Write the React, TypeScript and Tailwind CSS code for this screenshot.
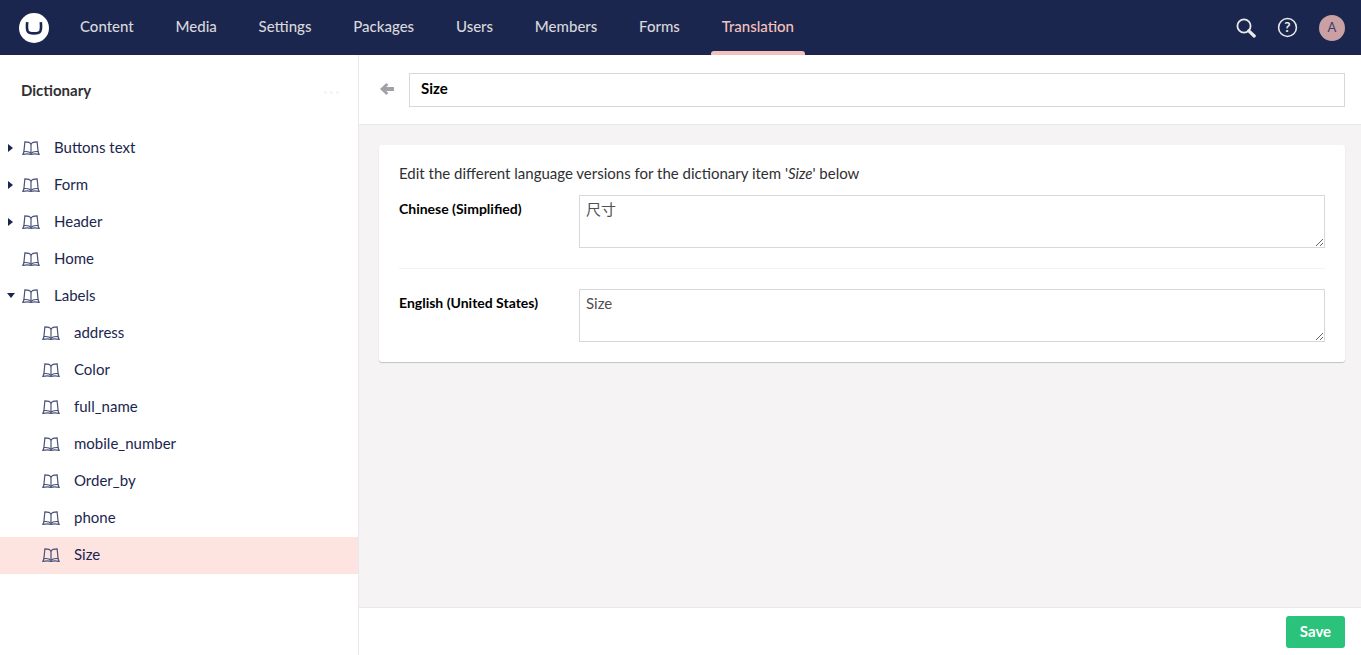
const navItems = ["Content", "Media", "Settings", "Packages", "Users", "Members", "Forms", "Translation"];

const treeItems = [
  { name: "Buttons text", caret: "right", depth: 0 },
  { name: "Form", caret: "right", depth: 0 },
  { name: "Header", caret: "right", depth: 0 },
  { name: "Home", caret: "", depth: 0 },
  { name: "Labels", caret: "down", depth: 0 },
  { name: "address", caret: "", depth: 1 },
  { name: "Color", caret: "", depth: 1 },
  { name: "full_name", caret: "", depth: 1 },
  { name: "mobile_number", caret: "", depth: 1 },
  { name: "Order_by", caret: "", depth: 1 },
  { name: "phone", caret: "", depth: 1 },
  { name: "Size", caret: "", depth: 1 },
];

function BookIcon() {
  return (
    <svg width="18" height="14" viewBox="0 0 18 14" fill="none" stroke="#4a5378" strokeWidth="1.2" className="shrink-0">
      <path d="M9 3C8 1.4 6 0.8 2.9 0.8L1.9 10.6C4.8 10.3 7.6 10.6 9 12.4C10.4 10.6 13.2 10.3 16.1 10.6L15.1 0.8C12 0.8 10 1.4 9 3Z" />
      <path d="M9 3V12.4" />
      <path d="M1.9 10.6L0.9 13.3C3.6 12.8 7 12.8 9 13.3C11 12.8 14.4 12.8 17.1 13.3L16.1 10.6" />
    </svg>
  );
}

function TreeRow({ name, caret, depth }: { name: string; caret: string; depth: number }) {
  const selected = name === "Size";
  return (
    <div className={`flex h-[37px] items-center pb-[2px] ${selected ? "bg-[#fee4e1]" : ""} ${depth ? "pl-[42px]" : "pl-[22px]"}`}>
      {caret === "right" && (
        <span className="-ml-[14px] mr-[9px] h-0 w-0 border-y-[4px] border-l-[5px] border-y-transparent border-l-[#1b264f]" />
      )}
      {caret === "down" && (
        <span className="-ml-[15px] mr-[7px] h-0 w-0 border-x-[4px] border-t-[5px] border-x-transparent border-t-[#1b264f]" />
      )}
      <BookIcon />
      <span className="ml-[14px] text-[15px] text-[#1b264f]">{name}</span>
    </div>
  );
}

function LangRow({ label, value, last }: { label: string; value: string; last?: boolean }) {
  return (
    <div className={`flex ${last ? "" : "border-b border-[#f3f3f5] pb-5 mb-5"}`}>
      <div className="w-[180px] shrink-0 pt-[5px] text-[14px] leading-[18px] font-bold text-[#000000]">{label}</div>
      <textarea
        readOnly
        value={value}
        className="block h-[53px] flex-1 resize-y border border-[#d8d7d9] bg-white px-[6px] py-[3px] text-[15px] leading-[20px] text-[#515054] outline-none"
        style={{ fontFamily: "Lato, 'Noto Sans CJK SC', sans-serif" }}
      />
    </div>
  );
}

export default function App() {
  return (
    <div className="flex h-[655px] w-[1361px] flex-col overflow-hidden bg-white font-['Lato','Noto_Sans_CJK_SC',sans-serif]">
      <header className="flex h-[55px] shrink-0 items-center bg-[#1b264f] pl-[19px] pr-[16px]">
        <div className="flex h-[30px] w-[30px] items-center justify-center rounded-full bg-white">
          <svg width="18" height="14" viewBox="0 0 18 14" fill="none">
            <path d="M2.2 1.2C1.8 5 1.8 8 2.6 10C3.4 11.8 6 12.4 9 12.4C12 12.4 14.6 11.8 15.4 10C16.2 8 16.2 5 15.8 1.2" stroke="#1b264f" strokeWidth="2.6" />
          </svg>
        </div>
        <nav className="ml-[20px] flex h-full gap-[19.8px]">
          {navItems.map((item) => {
            const active = item === "Translation";
            return (
              <div key={item} className="relative flex h-full items-center px-[11px] pb-[2px]">
                <span className={`text-[15px] ${active ? "text-[#f5c1bc]" : "text-[#d8d7d9]"}`} style={{ fontWeight: 500 }}>
                  {item}
                </span>
                {active && <span className="absolute inset-x-0 bottom-0 h-1 rounded-t-[3px] bg-[#f5c1bc]" />}
              </div>
            );
          })}
        </nav>
        <div className="ml-auto flex items-center">
          <svg width="20" height="20" viewBox="0 0 20 20" fill="none" className="translate-x-[1px]">
            <circle cx="8" cy="8" r="6.6" stroke="#e9e9eb" strokeWidth="1.8" />
            <path d="M12.8 12.8L18.2 18" stroke="#e9e9eb" strokeWidth="3.2" strokeLinecap="round" />
          </svg>
          <svg width="21" height="21" viewBox="0 0 20 20" fill="none" className="ml-[22px]">
            <circle cx="10" cy="10" r="8.5" stroke="#e9e9eb" strokeWidth="1.5" />
            <text x="10" y="14.5" textAnchor="middle" fontSize="13" fontWeight="700" fill="#e9e9eb" fontFamily="Lato">?</text>
          </svg>
          <div className="ml-[21px] flex h-[26px] w-[26px] items-center justify-center rounded-full bg-[#c9a0a4] text-[13px] text-[#3f3f66]">
            A
          </div>
        </div>
      </header>

      <div className="flex min-h-0 flex-1">
        <aside className="w-[359px] shrink-0 border-r border-[#e9e9eb]">
          <div className="flex h-[75px] items-center justify-between pb-[4px] pl-[21px] pr-[19px]">
            <span className="text-[15px] text-[#303033]" style={{ fontWeight: 700 }}>Dictionary</span>
            <span className="flex gap-[3px] pt-[4px]">
              <span className="h-[3px] w-[3px] rounded-full bg-[#f3f3f5]" />
              <span className="h-[3px] w-[3px] rounded-full bg-[#f3f3f5]" />
              <span className="h-[3px] w-[3px] rounded-full bg-[#f3f3f5]" />
            </span>
          </div>
          <div>
            {treeItems.map((row) => (
              <TreeRow key={row.name} {...row} />
            ))}
          </div>
        </aside>

        <main className="flex min-w-0 flex-1 flex-col">
          <div className="flex h-[70px] shrink-0 items-center border-b border-[#e9e9eb] pl-[21px] pr-[16px]">
            <svg width="14" height="12" viewBox="0 0 14 12" className="mb-[2px] mr-[15px] shrink-0" fill="#a2a1a6">
              <path d="M6.4 0L8.4 2L6.2 4H14V8H6.2L8.4 10L6.4 12L0 6Z" />
            </svg>
            <div className="flex h-[34px] flex-1 items-center border border-[#d8d7d9] px-[11px] pb-[2px] text-[15px] font-bold text-[#000000]">
              Size
            </div>
          </div>

          <div className="flex-1 bg-[#f5f3f4] pl-[20px] pr-[16px] pt-[20px]">
            <div className="rounded-[3px] bg-white px-[20px] pb-[20px] pt-[19px] shadow-[0_1px_1px_rgba(0,0,0,0.2)]">
              <p className="mb-[13px] text-[15px] leading-[18px] text-[#303033]">
                Edit the different language versions for the dictionary item '<em>Size</em>' below
              </p>
              <LangRow label="Chinese (Simplified)" value="尺寸" />
              <LangRow label="English (United States)" value="Size" last />
            </div>
          </div>

          <div className="flex h-[48px] shrink-0 items-center justify-end border-t border-[#e9e9eb] pr-[16px]">
            <button className="h-[32px] w-[59px] rounded-[3px] bg-[#2bc37c] text-[15px] font-bold text-white">Save</button>
          </div>
        </main>
      </div>
    </div>
  );
}
